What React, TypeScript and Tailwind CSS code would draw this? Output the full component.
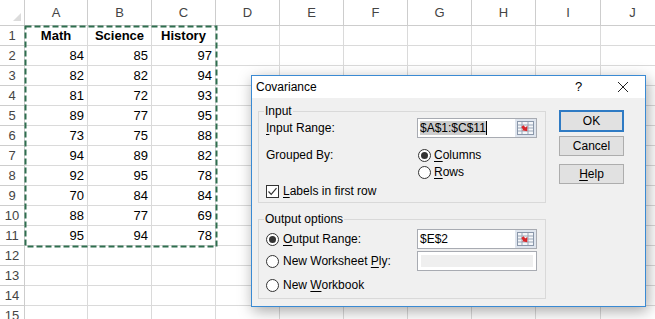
const COLS = ["A", "B", "C", "D", "E", "F", "G", "H", "I", "J"];

const DATA: (string | number)[][] = [
  ["Math", "Science", "History"],
  [84, 85, 97],
  [82, 82, 94],
  [81, 72, 93],
  [89, 77, 95],
  [73, 75, 88],
  [94, 89, 82],
  [92, 95, 78],
  [70, 84, 84],
  [88, 77, 69],
  [95, 94, 78],
];

function Radio({ checked }: { checked?: boolean }) {
  return (
    <span className="flex h-[13px] w-[13px] shrink-0 items-center justify-center rounded-full border border-[#333] bg-white">
      {checked && <span className="h-[7px] w-[7px] rounded-full bg-[#333]" />}
    </span>
  );
}

function Checkbox() {
  return (
    <span className="flex h-[13px] w-[13px] shrink-0 items-center justify-center border border-[#333] bg-white">
      <svg width="11" height="11" viewBox="0 0 11 11">
        <polyline points="1.5,5.5 4.2,8.3 9.5,2.2" fill="none" stroke="#333" strokeWidth="1.2" />
      </svg>
    </span>
  );
}

function RefIcon() {
  return (
    <span className="flex h-full w-[21px] items-center justify-center bg-[#dfe5ee]">
      <svg width="17" height="14" viewBox="0 0 17 14">
        <rect x="0.5" y="0.5" width="16" height="13" fill="#f4f6f9" stroke="#8a97aa" />
        <line x1="1" y1="4" x2="16" y2="4" stroke="#9aa7b8" />
        <line x1="1" y1="7" x2="16" y2="7" stroke="#9aa7b8" />
        <line x1="1" y1="10" x2="16" y2="10" stroke="#9aa7b8" />
        <line x1="5" y1="1" x2="5" y2="13" stroke="#9aa7b8" />
        <line x1="11" y1="1" x2="11" y2="13" stroke="#9aa7b8" />
        <polygon points="6,4 9,4 9,7 11.5,7 8,11 4.5,7 6,7" transform="rotate(-40 8 7.5)" fill="#d8262a" />
      </svg>
    </span>
  );
}

function Field({ children }: { children?: React.ReactNode }) {
  return (
    <div className="flex h-[20px] w-[120px] border border-[#a8abb2] bg-white">
      <div className="flex flex-1 items-center pl-[2px]">{children}</div>
      <RefIcon />
    </div>
  );
}

function U({ children }: { children: React.ReactNode }) {
  return <span className="underline underline-offset-[2px]">{children}</span>;
}

export default function App() {
  return (
    <div className="relative h-[319px] w-[655px] overflow-hidden bg-white font-['Liberation_Sans',Arial,sans-serif]">
      <div className="grid grid-cols-[25px_63px_64px_64px_64px_64px_64px_64px_64px_65px_64px] grid-rows-[26px_repeat(15,20px)] text-[13px] text-black">
        <div className="flex items-end justify-end border-r border-b border-[#cdcdcd] pr-[3px] pb-[4px]">
          <svg width="8" height="8" viewBox="0 0 8 8">
            <polygon points="8,0 8,8 0,8" fill="#dcdcdc" />
          </svg>
        </div>
        {COLS.map((c) => (
          <div key={c} className="flex items-center justify-center border-r border-b border-[#cdcdcd] text-[#444]">
            {c}
          </div>
        ))}
        {Array.from({ length: 15 }, (_, r) => (
          <div key={r} className="contents">
            <div className="flex items-center justify-center border-r border-b border-[#cdcdcd] text-[#444]">{r + 1}</div>
            {COLS.map((c, ci) => {
              const v = DATA[r]?.[ci];
              const head = r === 0;
              return (
                <div
                  key={c}
                  className={`flex items-center border-r border-b border-[#dadada] ${
                    head ? "justify-center font-bold" : "justify-end pr-[3px]"
                  }`}
                >
                  {v ?? ""}
                </div>
              );
            })}
          </div>
        ))}
      </div>

      {/* copy selection marching ants */}
      <svg className="absolute left-[24px] top-[25px]" width="194" height="223">
        <rect x="1.5" y="1.5" width="191" height="220" fill="none" stroke="#2f6e4f" strokeWidth="2" strokeDasharray="6 3" />
      </svg>

      {/* Covariance dialog */}
      <div className="absolute left-[251px] top-[75px] flex h-[232px] w-[395px] flex-col border border-[#3a8ad3] bg-[#f0f0f0] text-[12px] text-black shadow-[2px_4px_14px_rgba(0,0,0,0.35)]">
        <div className="flex h-[22px] items-center bg-white pl-[4px]">
          <span className="flex-1">Covariance</span>
          <span className="w-[26px] text-[13px]">?</span>
          <span className="flex w-[44px] justify-center">
            <svg width="12" height="12" viewBox="0 0 12 12">
              <path d="M1 1 L11 11 M11 1 L1 11" stroke="#222" strokeWidth="1" />
            </svg>
          </span>
        </div>

        <div className="flex flex-1 pl-[6px]">
          <div className="flex w-[288px] flex-col pt-[6px]">
            <fieldset className="flex h-[99px] flex-col border border-[#d9d9d9] pl-[7px]">
              <legend className="ml-[-2px] px-[1px] leading-[14px]">Input</legend>
              <div className="flex h-[20px] items-center">
                <span className="w-[151px]">
                  <U>I</U>nput Range:
                </span>
                <Field>
                  <span className="bg-[#cccccc] leading-[14px]">$A$1:$C$11</span>
                  <span className="h-[14px] w-px bg-black" />
                </Field>
              </div>
              <div className="mt-[9px] flex h-[16px] items-center">
                <span className="w-[152px]">Grouped By:</span>
                <Radio checked />
                <span className="ml-[3px]">
                  <U>C</U>olumns
                </span>
              </div>
              <div className="mt-[1px] flex h-[16px] items-center pl-[152px]">
                <Radio />
                <span className="ml-[3px]">
                  <U>R</U>ows
                </span>
              </div>
              <div className="mt-[3px] flex h-[16px] items-center">
                <Checkbox />
                <span className="ml-[4px]">
                  <U>L</U>abels in first row
                </span>
              </div>
            </fieldset>

            <fieldset className="mt-[9px] flex h-[87px] flex-col border border-[#d9d9d9] pl-[7px]">
              <legend className="ml-[-2px] px-[1px] leading-[14px]">Output options</legend>
              <div className="mt-[3px] flex h-[20px] items-center">
                <Radio checked />
                <span className="ml-[4px] w-[134px]">
                  <U>O</U>utput Range:
                </span>
                <Field>$E$2</Field>
              </div>
              <div className="mt-[2px] flex h-[20px] items-center">
                <Radio />
                <span className="ml-[4px] w-[134px]">
                  New Worksheet <U>P</U>ly:
                </span>
                <div className="h-[20px] w-[120px] border border-[#a8abb2] bg-white p-[3px]">
                  <div className="h-full w-full bg-[#efefef]" />
                </div>
              </div>
              <div className="mt-[6px] flex h-[16px] items-center">
                <Radio />
                <span className="ml-[4px]">
                  New <U>W</U>orkbook
                </span>
              </div>
            </fieldset>
          </div>

          <div className="ml-[13px] flex w-[65px] flex-col pt-[12px]">
            <button className="flex h-[22px] items-center justify-center border-2 border-[#2f7bc4] bg-[#e1e1e1]">OK</button>
            <button className="mt-[4px] flex h-[20px] items-center justify-center border border-[#adadad] bg-[#e1e1e1]">
              Cancel
            </button>
            <button className="mt-[8px] flex h-[20px] items-center justify-center border border-[#adadad] bg-[#e1e1e1]">
              <U>H</U>elp
            </button>
          </div>
        </div>
      </div>
    </div>
  );
}
